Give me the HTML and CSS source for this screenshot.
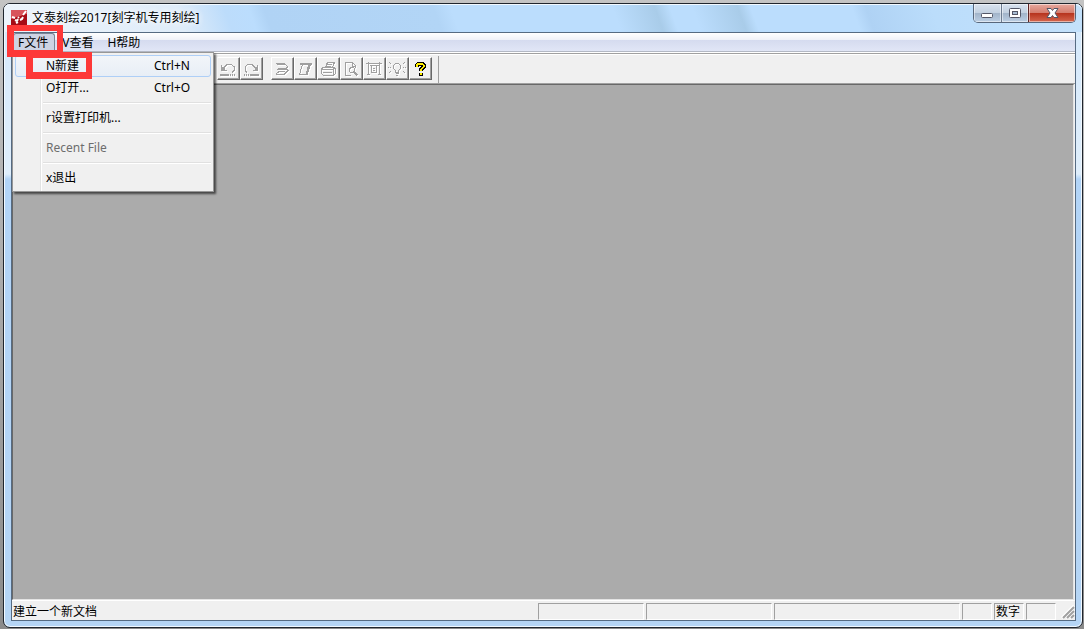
FILE: index.html
```html
<!DOCTYPE html>
<html lang="zh-CN">
<head>
    <meta charset="utf-8">
    <title>文泰刻绘2017[刻字机专用刻绘]</title>
    <link rel="stylesheet" href="styles.css">
</head>
<body>
    <div class="window">
        <header class="titlebar">
            <svg class="app-icon" width="16" height="16" viewBox="0 0 16 16">
                <rect width="16" height="16" fill="#b5121c"/>
                <path d="M0 0h16v4L0 9z" fill="#d8545b"/>
                <path d="M0 9l16-5v12H0z" fill="#a60c16"/>
                <path d="M1 7l3 1M4 10l2 1 1-2M7 7l1 1M9 10l2-1 1-2M12 5l3-4M5 13l2-1" stroke="#fff" stroke-width="2" fill="none"/>
            </svg>
            <h1 class="title">文泰刻绘2017[刻字机专用刻绘]</h1>
            <div class="window-buttons">
                <button class="win-btn min" aria-label="最小化">
                    <svg width="13" height="12" viewBox="0 0 13 12"><rect x="0.5" y="6.5" width="11" height="4" rx="1" fill="#fff" stroke="#535666"/></svg>
                </button>
                <button class="win-btn max" aria-label="最大化">
                    <svg width="13" height="12" viewBox="0 0 13 12"><rect x="0.5" y="1.5" width="11" height="9" rx="1" fill="#fff" stroke="#535666"/><rect x="3.5" y="4.5" width="5" height="3" fill="#a8bdd3" stroke="#535666"/></svg>
                </button>
                <button class="win-btn close" aria-label="关闭">
                    <svg width="13" height="12" viewBox="0 0 13 12"><path d="M1 1.500h4l1.500 2 1.500-2h4L9 6l3 4.500H8l-1.500-2-1.500 2H1L4 6z" fill="#fff" stroke="#535666"/></svg>
                </button>
            </div>
        </header>

        <div class="client">
            <nav class="menubar">
                <div class="menu-root">
                    <button class="menu-btn active">F文件</button>
                    <div class="menu">
                        <button class="menu-item selected"><span>N新建</span><span class="shortcut">Ctrl+N</span></button>
                        <button class="menu-item"><span>O打开...</span><span class="shortcut">Ctrl+O</span></button>
                        <hr>
                        <button class="menu-item">r设置打印机...</button>
                        <hr>
                        <button class="menu-item" disabled>Recent File</button>
                        <hr>
                        <button class="menu-item">x退出</button>
                        <span class="mark mark-new"></span>
                    </div>
                    <span class="mark mark-file"></span>
                </div>
                <button class="menu-btn">V查看</button>
                <button class="menu-btn">H帮助</button>
            </nav>

            <div class="toolbar">
                <div class="tool-group">
                    <button class="tool" aria-label="撤销">
                        <svg class="icon" viewBox="0 0 18 16"><path d="M2.500 4v5h5M3 8.500l3-3 2-2h4l3 2v4l-2 2"/><path d="M3 6h2v2H3z" fill="#a0a0a0"/><path d="M1 14h9M11 14h1M13 14h1M15 14h1" stroke-width="2"/></svg>
                    </button>
                    <button class="tool" aria-label="重做">
                        <svg class="icon" viewBox="0 0 18 16"><path d="M15.500 4v5h-5M15 8.500l-3-3-2-2H6l-3 2v4l2 2"/><path d="M13 6h2v2h-2z" fill="#a0a0a0"/><path d="M8 14h9M6 14h1M4 14h1M2 14h1" stroke-width="2"/></svg>
                    </button>
                </div>
                <div class="tool-group">
                    <button class="tool" aria-label="刻绘输出">
                        <svg class="icon" viewBox="0 0 18 16"><path d="M3 2.500h8l4 3.500-2 1.500H6M4 3.500h7M3 13.500h8l4-4-2-1.500M3 13l4-3h5M6 7l-1 1.500h8"/></svg>
                    </button>
                    <button class="tool" aria-label="平板">
                        <svg class="icon" viewBox="0 0 18 16"><path d="M4 2.500h12M4 3.500h12M6.500 3L3.500 13.500H11L14.500 3"/><path d="M13 4l-2.500 10" stroke-width="2"/></svg>
                    </button>
                    <button class="tool" aria-label="打印">
                        <svg class="icon" viewBox="0 0 18 16"><path d="M6.500 6l2-4.500h7L13.500 6M8 3.500h5M7 5.500h5M2.500 7.500l2-1h11l1 2v4l-2 2h-10l-2-2zM3 8.500h11v5M4 11.500h9M14 8l2-1M5 13.500v1h8"/></svg>
                    </button>
                    <button class="tool" aria-label="打印预览">
                        <svg class="icon" viewBox="0 0 18 16"><path d="M9 14.500H3.500v-13h7l3 3V7M10.500 2v3h3"/><circle cx="10" cy="9" r="2.500"/><path d="M12 11l3.500 3.500" stroke-width="2"/></svg>
                    </button>
                    <button class="tool" aria-label="页面">
                        <svg class="icon" viewBox="0 0 18 16"><path d="M1 2.500h16M3.500 1v13M14.500 1v13M2 13.500h3M13 13.500h3M5 4.500h9M6.500 5v6.500h5V5M8 7.500h2M8 9.500h2"/></svg>
                    </button>
                    <button class="tool" aria-label="提示">
                        <svg class="icon" viewBox="0 0 18 16"><path d="M7.500 11V9.500l-2-2v-3l2-2h3l2 2v3l-2 2V11zM7.500 12.500h3M8 14.500h2"/><path d="M1 1l2 2M17 1l-2 2M0 6.500h3M15 6.500h3M1 12l2-2M17 12l-2-2" stroke-dasharray="1 1"/></svg>
                    </button>
                    <button class="tool" aria-label="关于">
                        <svg class="help-icon" viewBox="0 0 18 16"><path d="M6 6V4l2-1.500h3L12.500 4v2L10 8.500V10" stroke="#000" stroke-width="4"/><path d="M8 12h4v3H8z" fill="#000"/><path d="M6 5.500V4l2-1.500h3L12.500 4v2L10 8.500V10" stroke="#ffee00" stroke-width="2"/><path d="M9 12h2v2H9z" fill="#ffee00"/></svg>
                    </button>
                </div>
            </div>

            <main class="workspace"></main>

            <footer class="statusbar">
                <span class="status-text">建立一个新文档</span>
                <span class="pane pane-a"></span>
                <span class="pane pane-b"></span>
                <span class="pane pane-c"></span>
                <span class="pane"></span>
                <span class="pane">数字</span>
                <span class="pane"></span>
                <svg class="grip" width="14" height="14" viewBox="0 0 14 14"><path d="M1 13L13 1M5 13l8-8M9 13l4-4" stroke="#fff" stroke-width="3"/><path d="M2 13L13 2M6 13l7-7M10 13l3-3" stroke="#a0a0a0" stroke-width="2"/></svg>
            </footer>
        </div>
    </div>
</body>
</html>
```

FILE: styles.css
```css
* {
    box-sizing: border-box;
}

body {
    margin: 0;
    padding: 3px 1px 1px 3px;
    height: 100vh;
    background: linear-gradient(#c4c4c4, #8a8a8a);
    font-family: "Noto Sans", "Noto Sans CJK SC", sans-serif;
    font-size: 12px;
    color: #000;
}

button {
    font: inherit;
    color: inherit;
    margin: 0;
    padding: 0;
    border: none;
    background: none;
}

svg {
    display: block;
}

.window {
    height: 100%;
    display: flex;
    flex-direction: column;
    padding: 0 6px 6px 7px;
    border: 1px solid #20262e;
    border-radius: 7px;
    box-shadow: inset 0 0 0 1px #f2f9ff;
    background: linear-gradient(#d4e8fb, #dfeefb 170px, #b2d4f7 175px, #b5d5f5);
}

/* title bar */
.titlebar {
    height: 28px;
    margin: 0 -6px 0 -7px;
    padding: 0 6px 0 7px;
    display: flex;
    align-items: center;
    border-radius: 6px 6px 0 0;
    box-shadow: inset 0 1px 0 #f2f9ff;
    background: linear-gradient(70deg, #edf4fb 0, #dfecf9 170px, #bcdcfb 215px, #bbddfd 238px, #b0d3f5 252px, #b2d5f6 412px, #bbddfd 428px, #bbddfd 580px, #a9cce9 620px, #bbddfd 634px, #bbddfd 655px, #a9cce9 698px, #bbddfd 710px, #bbddfd 805px, #afd2f4 818px, #bbddfb 880px, #c4e1fb);
}

.app-icon {
    margin-right: 5px;
}

.title {
    flex: 1;
    margin: 0;
    font-size: 12px;
    font-weight: normal;
    line-height: 26px;
    text-shadow: 0 0 6px #fff, 0 0 6px #fff;
}

.window-buttons {
    align-self: flex-start;
    display: flex;
    border: 1px solid #58677b;
    border-top: none;
    border-radius: 0 0 5px 5px;
    overflow: hidden;
}

.win-btn {
    height: 18px;
    display: flex;
    align-items: center;
    justify-content: center;
    background: linear-gradient(#d8e2ee, #c2d0e0 50%, #a1b3c8 50%, #bccfe4);
    box-shadow: inset 0 0 0 1px rgba(255, 255, 255, 0.5);
}

.min {
    width: 27px;
}

.max {
    width: 27px;
    border-left: 1px solid #6d7c90;
}

.close {
    width: 47px;
    border-left: 1px solid #5e2422;
    background: linear-gradient(#e7a99f, #d47c6d 50%, #b5321c 50%, #d5674f);
}

/* client area */
.client {
    flex: 1;
    display: flex;
    flex-direction: column;
    border: 1px solid #566b82;
    background: #f0f0f0;
}

.menubar {
    height: 19px;
    display: flex;
    border-bottom: 1px solid #b3b8c4;
    background: linear-gradient(#fff, #eff1f8 7px, #d5dbef 7px, #e1e6f6);
}

.menu-root {
    position: relative;
}

.menu-btn {
    height: 18px;
    padding: 0 7px;
    line-height: 20px;
    white-space: nowrap;
}

.menu-btn.active {
    margin-left: 1px;
    padding: 0 6px 0 4px;
    border: 1px solid #7a8494;
    border-bottom: none;
    border-radius: 3px 3px 0 0;
    line-height: 18px;
    background: #cdd3e3;
}

.menu {
    position: absolute;
    top: 19px;
    left: 0;
    z-index: 2;
    width: 202px;
    padding: 2px;
    border: 1px solid #979797;
    box-shadow: 2px 2px 2px rgba(0, 0, 0, 0.6);
    background: linear-gradient(90deg, transparent 27px, #e2e3e3 27px, #e2e3e3 28px, #fff 28px, #fff 29px, transparent 29px) #f0f0f0;
}

.menu-item {
    width: 100%;
    height: 22px;
    display: flex;
    align-items: center;
    justify-content: space-between;
    padding: 0 17px 2px 30px;
    border: 1px solid transparent;
    border-radius: 3px;
    text-align: left;
}

.menu-item.selected {
    border-color: #aecff7;
    background: linear-gradient(#f2f5f9, #e8eef6);
}

.menu-item:disabled {
    color: #6d6d6d;
}

.shortcut {
    width: 39px;
}

.menu hr {
    height: 2px;
    margin: 3px 0 3px 28px;
    border: none;
    border-top: 1px solid #e0e0e0;
    background: #fff;
}

/* red frames over the menu steps */
.mark {
    position: absolute;
    z-index: 3;
    border: 6px solid #fd3838;
    border-left-width: 7px;
    border-bottom-width: 7px;
}

.mark-file {
    top: -8px;
    left: -5px;
    width: 56px;
    height: 32px;
}

.mark-new {
    top: -1px;
    left: 13px;
    width: 66px;
    height: 27px;
}

/* toolbar */
.toolbar {
    height: 32px;
    display: flex;
    gap: 8px;
    padding: 3px 0 0 205px;
    border-top: 1px solid #fff;
    border-bottom: 1px solid #a0a0a0;
    box-shadow: inset 0 1px 0 #a0a0a0, inset 0 2px 0 #fff;
}

.tool-group {
    display: flex;
}

.tool-group:last-child {
    padding-right: 6px;
    border-right: 1px solid #a0a0a0;
}

.tool {
    width: 23px;
    height: 23px;
    margin-top: 1px;
    padding: 2px 1px;
    border: 1px solid #fff;
    border-right-color: #696969;
    border-bottom-color: #696969;
    box-shadow: inset -1px -1px 0 #a0a0a0;
}

.tool svg {
    width: 18px;
    height: 16px;
    fill: none;
    shape-rendering: crispEdges;
}

.icon {
    stroke: #a0a0a0;
    filter: drop-shadow(1px 1px 0 #fff);
}

/* document area */
.workspace {
    flex: 1;
    margin-right: 1px;
    border-top: 1px solid #696969;
    border-left: 1px solid #696969;
    border-right: 1px solid #e3e3e3;
    border-bottom: 1px solid #e3e3e3;
    background: #ababab;
}

/* status bar */
.statusbar {
    height: 20px;
    display: flex;
    gap: 2px;
    padding-top: 2px;
    border-top: 1px solid #fff;
}

.status-text {
    flex: 1;
    padding-left: 1px;
    line-height: 17px;
}

.pane {
    width: 30px;
    height: 17px;
    padding-left: 1px;
    line-height: 15px;
    white-space: nowrap;
    border: 1px solid #a0a0a0;
    border-right-color: #fff;
    border-bottom-color: #fff;
}

.pane-a {
    width: 106px;
}

.pane-b {
    width: 126px;
}

.pane-c {
    width: 186px;
}

.grip {
    align-self: flex-end;
    margin: 0 0 1px 3px;
}
```
